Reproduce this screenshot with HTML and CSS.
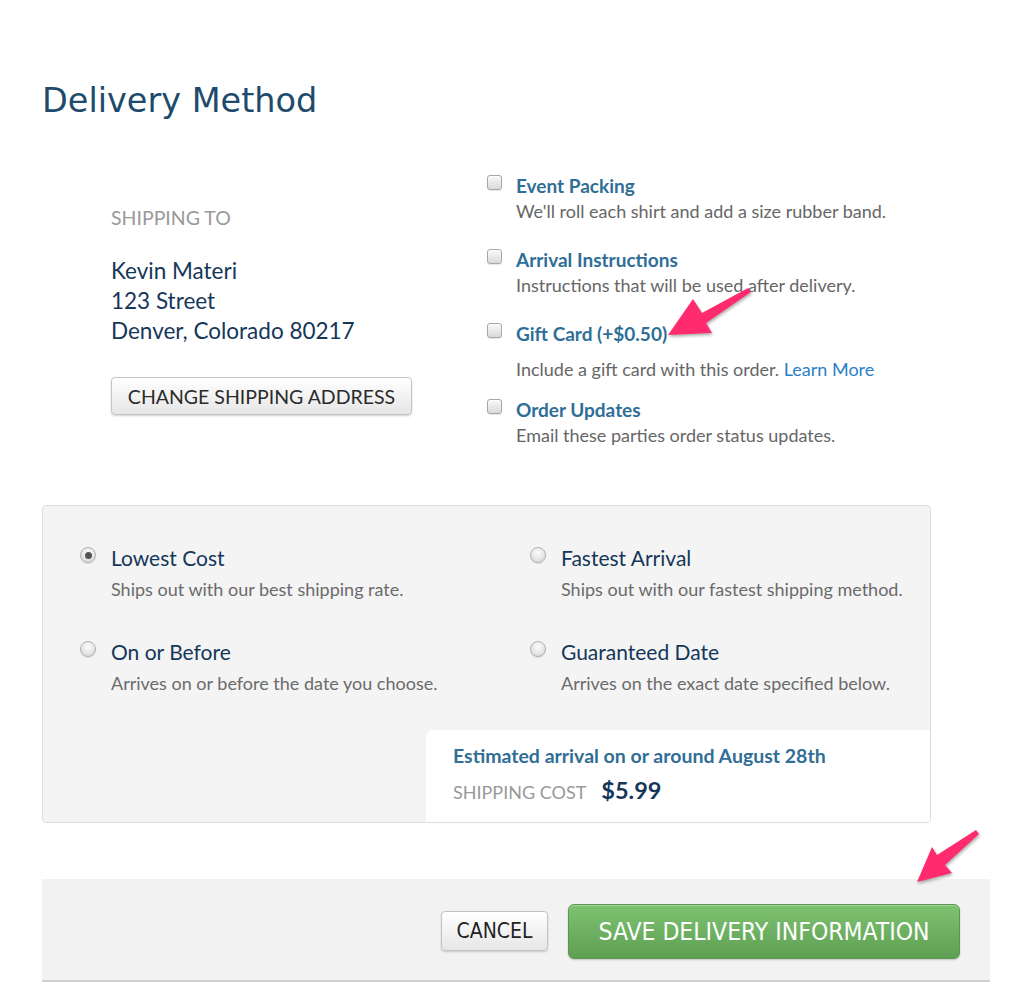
FILE: index.html
```html
<!DOCTYPE html>
<html lang="en">
<head>
<meta charset="utf-8">
<title>Delivery Method</title>
<link rel="stylesheet" href="styles.css">
</head>
<body>
<div class="page">
  <h1 class="title">Delivery Method</h1>

  <section class="top">
    <div class="ship">
      <div class="ship-label">SHIPPING TO</div>
      <address class="addr">Kevin Materi<br>123 Street<br>Denver, Colorado 80217</address>
      <button class="btn-light btn-change" type="button">CHANGE SHIPPING ADDRESS</button>
    </div>

    <ul class="options">
      <li class="opt">
        <span class="check"></span>
        <div class="opt-body">
          <div class="opt-title">Event Packing</div>
          <div class="opt-desc">We'll roll each shirt and add a size rubber band.</div>
        </div>
      </li>
      <li class="opt">
        <span class="check"></span>
        <div class="opt-body">
          <div class="opt-title">Arrival Instructions</div>
          <div class="opt-desc">Instructions that will be used after delivery.</div>
        </div>
      </li>
      <li class="opt">
        <span class="check"></span>
        <div class="opt-body">
          <div class="opt-title">Gift Card (+$0.50)</div>
          <div class="opt-desc opt-desc-gap">Include a gift card with this order. <a class="link" href="#">Learn More</a></div>
        </div>
      </li>
      <li class="opt">
        <span class="check"></span>
        <div class="opt-body">
          <div class="opt-title">Order Updates</div>
          <div class="opt-desc">Email these parties order status updates.</div>
        </div>
      </li>
    </ul>
  </section>

  <section class="methods">
    <div class="method-grid">
      <div class="method">
        <span class="radio radio-on"></span>
        <div>
          <div class="method-title">Lowest Cost</div>
          <div class="method-desc">Ships out with our best shipping rate.</div>
        </div>
      </div>
      <div class="method">
        <span class="radio"></span>
        <div>
          <div class="method-title">Fastest Arrival</div>
          <div class="method-desc">Ships out with our fastest shipping method.</div>
        </div>
      </div>
      <div class="method">
        <span class="radio"></span>
        <div>
          <div class="method-title">On or Before</div>
          <div class="method-desc">Arrives on or before the date you choose.</div>
        </div>
      </div>
      <div class="method">
        <span class="radio"></span>
        <div>
          <div class="method-title">Guaranteed Date</div>
          <div class="method-desc">Arrives on the exact date specified below.</div>
        </div>
      </div>
    </div>
    <div class="estimate">
      <div class="est-title">Estimated arrival on or around August 28th</div>
      <div class="est-cost"><span class="cost-label">SHIPPING COST</span><span class="cost-value">$5.99</span></div>
    </div>
  </section>

  <footer class="actions">
    <button class="btn-light btn-cancel" type="button">CANCEL</button>
    <button class="btn-save" type="button">SAVE DELIVERY INFORMATION</button>
  </footer>
</div>

<svg class="arrows" width="1012" height="1006" viewBox="0 0 1012 1006" aria-hidden="true">
  <polygon class="arrow" points="668,335 693,299 702,313 748,288 751,292 706,323 712,333"/>
  <polygon class="arrow" points="917,882 932,847 937,855 976,830 979,834 945,865 952,873"/>
</svg>
</body>
</html>
```

FILE: styles.css
```css
* { box-sizing: border-box; }

html, body {
  margin: 0;
  padding: 0;
  background: #ffffff;
}

body {
  font-family: Lato, "Open Sans", "Liberation Sans", sans-serif;
  color: #333;
  width: 1012px;
  min-height: 1006px;
  position: relative;
}

.page {
  padding-left: 42px;
  width: 990px;
}

.title {
  margin: 0;
  padding-top: 81px;
  font-family: "DejaVu Sans", Verdana, sans-serif;
  font-weight: normal;
  font-size: 33.5px;
  line-height: 40px;
  color: #1e4b6b;
}

/* ---------- top section ---------- */
.top {
  display: flex;
  margin-top: 53px;
  padding-left: 69px;
}

.ship {
  width: 376px;
  padding-top: 32px;
}

.ship-label {
  font-size: 19.5px;
  line-height: 24px;
  color: #999;
}

.addr {
  margin-top: 26px;
  font-style: normal;
  font-size: 22.5px;
  line-height: 30px;
  color: #153759;
}

.btn-light {
  font-family: Lato, "Open Sans", sans-serif;
  background: linear-gradient(#ffffff, #e6e6e6);
  border: 1px solid #c4c4c4;
  border-radius: 4px;
  box-shadow: 0 1px 2px rgba(0,0,0,0.18), inset 0 1px 0 #fff;
  color: #2b2b2b;
  padding: 0;
  cursor: pointer;
}

.btn-change {
  margin-top: 31px;
  width: 301px;
  height: 38px;
  font-size: 19.5px;
}

.options {
  list-style: none;
  margin: 0;
  padding: 0;
  display: flex;
  flex-direction: column;
  gap: 24px;
}

.opt {
  display: flex;
  align-items: flex-start;
  gap: 14px;
}

.check {
  flex: none;
  width: 15px;
  height: 15px;
  margin-top: 1px;
  border: 1px solid #a6a6a6;
  border-radius: 3px;
  background: linear-gradient(#fafafa, #d9d9d9);
  box-shadow: inset 0 1px 1px rgba(255,255,255,0.9), 0 1px 1px rgba(0,0,0,0.1);
}

.opt-title {
  font-size: 19px;
  font-weight: bold;
  line-height: 24px;
  color: #2f6e96;
}

.opt-desc {
  font-size: 18px;
  line-height: 26px;
  color: #666;
}

.opt-desc-gap {
  margin-top: 10px;
  margin-bottom: -8px;
}

.link {
  color: #2a80c6;
  text-decoration: none;
}

/* ---------- methods panel ---------- */
.methods {
  margin-top: 57px;
  width: 889px;
  background: #f4f4f4;
  border: 1px solid #dcdcdc;
  border-radius: 4px;
  padding-top: 39px;
  display: flex;
  flex-direction: column;
  overflow: hidden;
}

.method-grid {
  display: grid;
  grid-template-columns: 450px 1fr;
  row-gap: 38px;
  padding-left: 37px;
}

.method {
  display: flex;
  align-items: flex-start;
  gap: 15px;
}

.radio {
  flex: none;
  width: 16px;
  height: 16px;
  margin-top: 2px;
  border-radius: 50%;
  border: 1px solid #b0b0b0;
  background: radial-gradient(circle at 50% 35%, #fbfbfb 0%, #e2e2e2 65%, #cfcfcf 100%);
  box-shadow: 0 1px 1px rgba(0,0,0,0.1);
  position: relative;
}

.radio-on::after {
  content: "";
  position: absolute;
  left: 3.5px;
  top: 3.5px;
  width: 7px;
  height: 7px;
  border-radius: 50%;
  background: #555;
}

.method-title {
  font-size: 21px;
  line-height: 26px;
  color: #153759;
}

.method-desc {
  margin-top: 6px;
  font-size: 18px;
  line-height: 24px;
  color: #6b6b6b;
}

.estimate {
  margin-top: 35px;
  margin-left: auto;
  width: 504px;
  height: 92px;
  background: #ffffff;
  border-top-left-radius: 7px;
  padding: 13px 0 0 27px;
}

.est-title {
  font-size: 19.5px;
  font-weight: bold;
  line-height: 26px;
  color: #316e96;
}

.est-cost {
  margin-top: 7px;
  display: flex;
  align-items: baseline;
  gap: 15px;
}

.cost-label {
  font-size: 18px;
  color: #999;
}

.cost-value {
  font-size: 23.5px;
  font-weight: bold;
  color: #16375a;
}

/* ---------- footer ---------- */
.actions {
  margin-top: 56px;
  width: 948px;
  height: 103px;
  background: #f2f2f2;
  border-bottom: 2px solid #cfcfcf;
  display: flex;
  justify-content: flex-end;
  align-items: center;
  gap: 20px;
  padding: 3px 30px 0 0;
}

.btn-cancel {
  width: 107px;
  height: 40px;
  font-family: "DejaVu Sans Condensed", "DejaVu Sans", sans-serif;
  font-stretch: condensed;
  font-size: 21px;
  color: #222;
}

.btn-save {
  width: 392px;
  height: 55px;
  border: 1px solid #5b954f;
  border-radius: 6px;
  background: linear-gradient(#7dc271, #5f9f53);
  box-shadow: inset 0 1px 0 rgba(255,255,255,0.3), 0 1px 2px rgba(0,0,0,0.2);
  color: #ffffff;
  font-family: "DejaVu Sans Condensed", "DejaVu Sans", sans-serif;
  font-stretch: condensed;
  font-size: 24.5px;
  padding: 0;
  cursor: pointer;
}

/* ---------- annotation arrows ---------- */
.arrows {
  position: absolute;
  left: 0;
  top: 0;
  pointer-events: none;
}

.arrow {
  fill: #ff2b6e;
  filter: drop-shadow(1px 2px 1.5px rgba(0,0,0,0.3));
}
```
